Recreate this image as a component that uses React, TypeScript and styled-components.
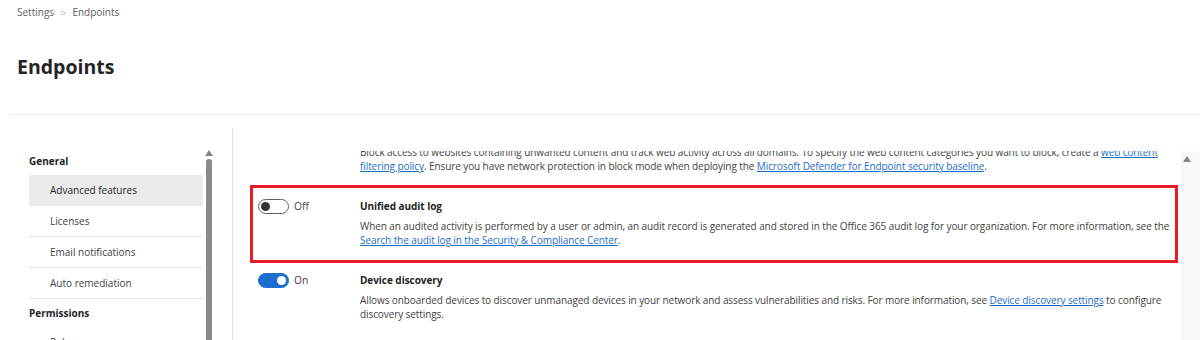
import React from "react";
import styled, { createGlobalStyle } from "styled-components";

const GlobalStyle = createGlobalStyle`
  html, body { margin: 0; padding: 0; background: #ffffff; }
  body {
    font-family: "Open Sans", "Noto Sans", sans-serif;
    color: #323130;
    overflow: hidden;
  }
  * { box-sizing: border-box; }
`;

const Page = styled.div`
  width: 1200px;
  height: 340px;
  display: flex;
  flex-direction: column;
  overflow: hidden;
`;

const Breadcrumb = styled.nav`
  display: flex;
  align-items: center;
  gap: 6px;
  height: 24px;
  flex: none;
  padding-left: 17px;
  font-size: 10px;
  color: #616161;
`;

const Chevron = styled.span`
  font-size: 11px;
  font-weight: 300;
  color: #8a8886;
`;

const Title = styled.h1`
  margin: 0;
  height: 90px;
  flex: none;
  display: flex;
  align-items: center;
  padding: 0 0 5px 17px;
  font-size: 19.5px;
  font-weight: 700;
  color: #242424;
`;

const HeaderRule = styled.div`
  margin-left: 10px;
  flex: none;
  border-top: 1px solid #ebebeb;
`;

const Body = styled.div`
  flex: 1;
  min-height: 0;
  display: flex;
  padding-top: 13px;
`;

const Sidebar = styled.aside`
  width: 233px;
  border-right: 1px solid #e1dfdd;
  display: flex;
  padding-left: 29px;
  overflow: hidden;
`;

const NavList = styled.div`
  width: 174px;
  padding-top: 19px;
  display: flex;
  flex-direction: column;
`;

const NavHeading = styled.div`
  height: 28px;
  flex: none;
  display: flex;
  align-items: center;
  font-size: 10px;
  font-weight: 700;
  color: #242424;
`;

const NavItem = styled.div<{ $active?: boolean }>`
  height: 31px;
  flex: none;
  display: flex;
  align-items: center;
  padding-left: 21px;
  font-size: 10px;
  color: ${(p) => (p.$active ? "#242424" : "#424242")};
  background: ${(p) => (p.$active ? "#ebebeb" : "transparent")};
  border-bottom: 1px solid ${(p) => (p.$active ? "#ebebeb" : "#e6e6e6")};
`;

const SideScroll = styled.div`
  width: 8px;
  margin-left: 2px;
  padding-top: 22px;
  display: flex;
  flex-direction: column;
  align-items: center;
`;

const ScrollArrow = styled.div`
  width: 0;
  height: 0;
  border-left: 4px solid transparent;
  border-right: 4px solid transparent;
  border-bottom: 6px solid #858585;
`;

const SideThumb = styled.div`
  margin-top: 3px;
  width: 6px;
  flex: 1;
  background: #8a8a8a;
  border-radius: 3px 3px 0 0;
`;

const Content = styled.main`
  flex: 1;
  min-width: 0;
  display: flex;
  padding-top: 23px;
`;

const Viewport = styled.div`
  flex: 1;
  overflow: hidden;
  padding-left: 17px;
`;

const Rows = styled.div`
  margin-top: -36px;
  width: 928px;
`;

const Row = styled.section<{ $highlight?: boolean }>`
  display: grid;
  grid-template-columns: 102px 1fr;
  padding: ${(p) => (p.$highlight ? "11px 5px 13px 5px" : "10px 8px 12px 8px")};
  border: ${(p) => (p.$highlight ? "3px solid #ed1c24" : "none")};
`;

const ToggleCell = styled.div`
  display: flex;
  align-items: flex-start;
  gap: 5px;
`;

const Switch = styled.span<{ $on?: boolean }>`
  width: 31px;
  height: 15px;
  border-radius: 8px;
  display: flex;
  align-items: center;
  justify-content: ${(p) => (p.$on ? "flex-end" : "flex-start")};
  padding: 0 2px;
  background: ${(p) => (p.$on ? "#1c6dd0" : "#ffffff")};
  border: 1px solid ${(p) => (p.$on ? "#1c6dd0" : "#616161")};
`;

const Knob = styled.span<{ $on?: boolean }>`
  width: 9px;
  height: 9px;
  border-radius: 50%;
  background: ${(p) => (p.$on ? "#ffffff" : "#333333")};
`;

const SwitchLabel = styled.span`
  font-size: 10.3px;
  line-height: 15px;
  color: #424242;
`;

const TextCell = styled.div`
  min-width: 0;
`;

const RowTitle = styled.div`
  font-size: 10px;
  line-height: 14px;
  font-weight: 700;
  letter-spacing: -0.05px;
  color: #242424;
`;

const RowDesc = styled.p`
  margin: 6px 0 0;
  font-size: 10px;
  line-height: 14px;
  letter-spacing: -0.09px;
  color: #424242;
  white-space: nowrap;
`;

const Link = styled.a`
  color: #1a6ec9;
  text-decoration: underline;
`;

const RightScroll = styled.div`
  width: 19px;
  background: #f8f8f8;
  padding: 5px 0 0 2px;
`;

type Setting = {
  title: string;
  on: boolean;
  highlight?: boolean;
  desc: React.ReactNode;
};

const settings: Setting[] = [
  {
    title: "Web content filtering",
    on: true,
    desc: (
      <>
        Block access to websites containing unwanted content and track web activity across all domains. To specify the web content categories you want to block, create a <Link>web content</Link>
        <br />
        <Link>filtering policy</Link>. Ensure you have network protection in block mode when deploying the <Link>Microsoft Defender for Endpoint security baseline</Link>.
      </>
    ),
  },
  {
    title: "Unified audit log",
    on: false,
    highlight: true,
    desc: (
      <>
        When an audited activity is performed by a user or admin, an audit record is generated and stored in the Office 365 audit log for your organization. For more information, see the
        <br />
        <Link>Search the audit log in the Security &amp; Compliance Center</Link>.
      </>
    ),
  },
  {
    title: "Device discovery",
    on: true,
    desc: (
      <>
        Allows onboarded devices to discover unmanaged devices in your network and assess vulnerabilities and risks. For more information, see <Link>Device discovery settings</Link> to configure
        <br />
        discovery settings.
      </>
    ),
  },
];

export default function App() {
  return (
    <Page>
      <GlobalStyle />
      <Breadcrumb>
        <span>Settings</span>
        <Chevron>&gt;</Chevron>
        <span>Endpoints</span>
      </Breadcrumb>
      <Title>Endpoints</Title>
      <HeaderRule />
      <Body>
        <Sidebar>
          <NavList>
            <NavHeading>General</NavHeading>
            <NavItem $active>Advanced features</NavItem>
            <NavItem>Licenses</NavItem>
            <NavItem>Email notifications</NavItem>
            <NavItem>Auto remediation</NavItem>
            <NavHeading>Permissions</NavHeading>
            <NavItem>Roles</NavItem>
          </NavList>
          <SideScroll>
            <ScrollArrow />
            <SideThumb />
          </SideScroll>
        </Sidebar>
        <Content>
          <Viewport>
            <Rows>
              {settings.map((s) => (
                <Row key={s.title} $highlight={s.highlight}>
                  <ToggleCell>
                    <Switch $on={s.on}>
                      <Knob $on={s.on} />
                    </Switch>
                    <SwitchLabel>{s.on ? "On" : "Off"}</SwitchLabel>
                  </ToggleCell>
                  <TextCell>
                    <RowTitle>{s.title}</RowTitle>
                    <RowDesc>{s.desc}</RowDesc>
                  </TextCell>
                </Row>
              ))}
            </Rows>
          </Viewport>
          <RightScroll>
            <ScrollArrow />
          </RightScroll>
        </Content>
      </Body>
    </Page>
  );
}
